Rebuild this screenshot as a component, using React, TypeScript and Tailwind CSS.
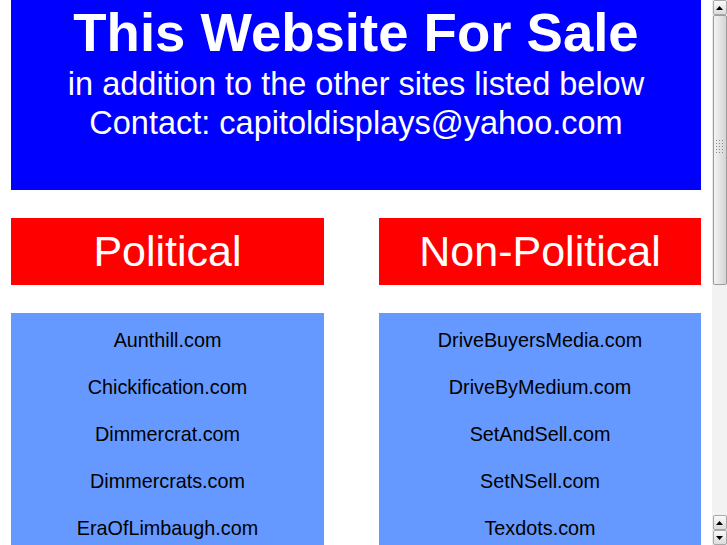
const political = [
  'Aunthill.com',
  'Chickification.com',
  'Dimmercrat.com',
  'Dimmercrats.com',
  'EraOfLimbaugh.com',
]

const nonPolitical = [
  'DriveBuyersMedia.com',
  'DriveByMedium.com',
  'SetAndSell.com',
  'SetNSell.com',
  'Texdots.com',
]

function SiteColumn({ title, sites }: { title: string; sites: string[] }) {
  return (
    <div className="flex flex-col">
      <div className="h-[67px] bg-[#ff0000] flex items-center justify-center">
        <h2 className="text-[43px] leading-none text-white">{title}</h2>
      </div>
      <ul className="mt-[28px] bg-[#6699ff] pt-[16px] pb-[24px] flex flex-col gap-[24px] text-center">
        {sites.map((site) => (
          <li key={site} className="text-[19.8px] leading-[23px] text-black">
            {site}
          </li>
        ))}
      </ul>
    </div>
  )
}

function ArrowButton({ down }: { down?: boolean }) {
  return (
    <div className="h-[15px] w-[14px] mx-auto rounded-[2px] border border-[#a8a8a8] bg-gradient-to-b from-[#fafafa] to-[#dcdcdc] flex items-center justify-center">
      <svg width="7" height="4" viewBox="0 0 7 4">
        {down ? <path d="M0 0h7L3.5 4z" fill="#000" /> : <path d="M0 4h7L3.5 0z" fill="#000" />}
      </svg>
    </div>
  )
}

// old gtk-style scrollbar strip on the right edge
function Scrollbar() {
  return (
    <div className="w-[15px] h-full flex flex-col bg-[#ececec]">
      <ArrowButton />
      <div className="h-[270px] w-[14px] mx-auto rounded-[2px] border border-[#9c9c9c] bg-gradient-to-r from-[#f4f4f4] via-[#e4e4e4] to-[#d4d4d4] flex items-center justify-center">
        <div className="grid grid-cols-3 gap-[2px] -mt-[8px]">
          {Array.from({ length: 15 }).map((_, i) => (
            <span key={i} className="w-[1px] h-[1px] bg-[#8a8a8a]" />
          ))}
        </div>
      </div>
      <div className="flex-1 bg-[#f2f2f2]" />
      <ArrowButton />
      <ArrowButton down />
    </div>
  )
}

export default function App() {
  return (
    <div className="h-[545px] w-[727px] overflow-hidden flex bg-white font-['Liberation_Sans',Arial,sans-serif]">
      <main className="w-[712px] px-[11px]">
        {/* Banner */}
        <header className="h-[190px] bg-[#0000ff] text-center text-white">
          <h1 className="text-[54.5px] font-bold leading-[65px]">This Website For Sale</h1>
          <p className="text-[32.5px] leading-[39px]">in addition to the other sites listed below</p>
          <p className="text-[32.5px] leading-[39px]">Contact: capitoldisplays@yahoo.com</p>
        </header>

        <div className="mt-[28px] grid grid-cols-[313px_322px] gap-[55px]">
          <SiteColumn title="Political" sites={political} />
          <SiteColumn title="Non-Political" sites={nonPolitical} />
        </div>
      </main>
      <Scrollbar />
    </div>
  )
}
